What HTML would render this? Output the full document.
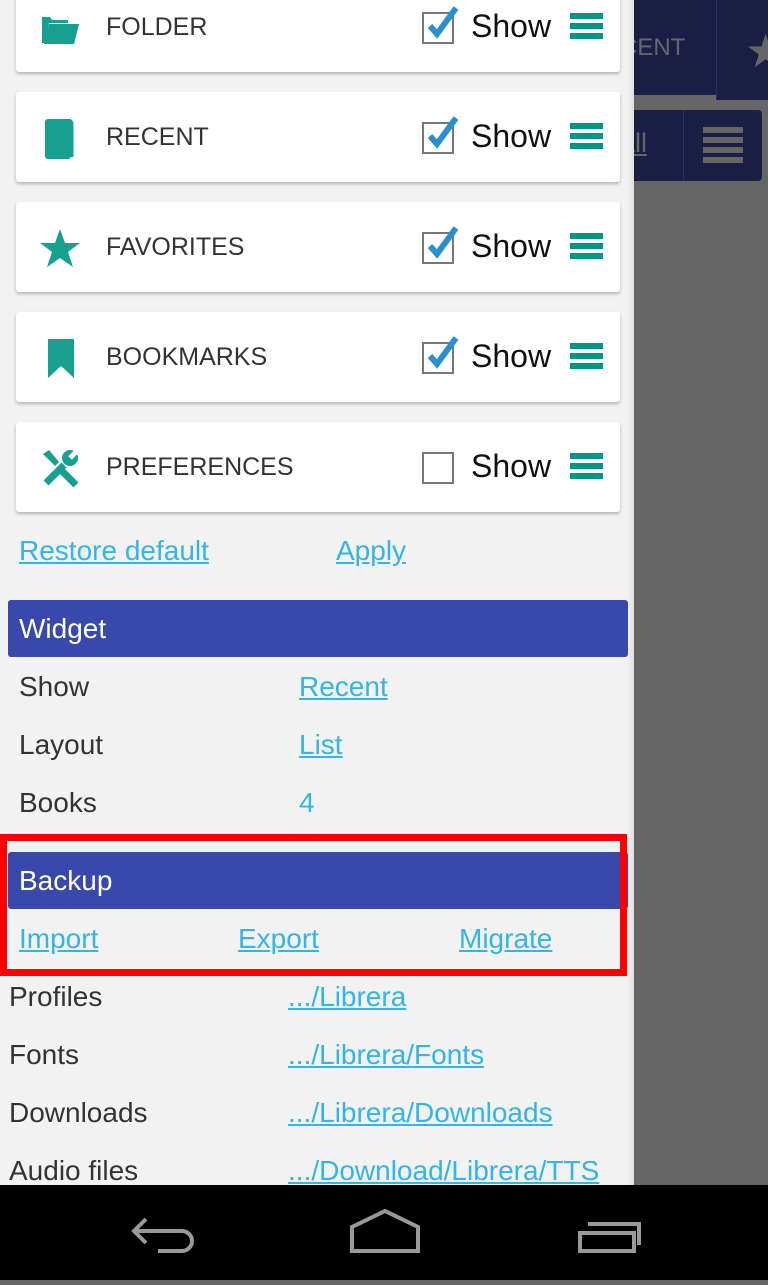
<!DOCTYPE html>
<html><head><meta charset="utf-8"><style>
*{margin:0;padding:0;box-sizing:border-box}
body{width:768px;height:1280px;overflow:hidden;background:#666;font-family:"Liberation Sans",sans-serif;position:relative}
.panel{position:absolute;left:0;top:0;width:634px;height:1185px;background:#f2f2f2;overflow:hidden}
.card{position:absolute;left:16px;width:604px;height:90px;background:#fff;border-radius:3px;box-shadow:0 2px 3px rgba(0,0,0,.25)}
.card .ic{position:absolute;left:24px;top:27px;width:40px;height:40px}
.card .lb{position:absolute;left:90px;top:31px;font-size:25px;color:#333}
.card .cb{position:absolute;left:406px;top:30px;width:32px;height:32px;border:2px solid #777;background:#fff}
.card .cb svg{position:absolute;left:2px;top:-12px}
.card .sh{position:absolute;left:455px;top:26px;font-size:32px;color:#111}
.card .hb{position:absolute;left:554px;top:31px;width:33px}
.card .hb i{display:block;height:6px;background:#009688;margin-bottom:4px}
a{color:#33b5e5;text-decoration:underline}
.t{position:absolute;font-size:28px}
.bar{position:absolute;left:8px;width:620px;height:57px;background:#3949ab;border-radius:3px;color:#fff;font-size:28px;padding:13px 11px}
.g{color:#333}
</style></head><body>
<div style="position:absolute;left:634px;top:0;width:134px;height:100px;background:#1a1e45"></div>
<div style="position:absolute;left:716px;top:0;width:1px;height:100px;background:#2c3060"></div>
<div style="position:absolute;left:634px;top:95px;width:82px;height:5px;background:#666"></div>
<div style="position:absolute;left:620px;top:34px;font-size:24px;color:#666">CENT</div>
<div style="position:absolute;left:745px;top:24px;font-size:46px;color:#666">★</div>
<div style="position:absolute;left:634px;top:110px;width:128px;height:71px;background:#1a1e45;border-radius:0 4px 4px 0"></div>
<div style="position:absolute;left:683px;top:110px;width:1px;height:71px;background:#2c3060"></div>
<div style="position:absolute;left:620px;top:128px;font-size:27px;color:#666;text-decoration:underline">all</div>
<div style="position:absolute;left:703px;top:127px;width:40px"><div style="height:6px;background:#666;margin-bottom:4px"></div><div style="height:6px;background:#666;margin-bottom:4px"></div><div style="height:6px;background:#666;margin-bottom:4px"></div><div style="height:6px;background:#666"></div></div>

<div class="panel">
<div class="card" style="top:-18px">
 <svg class="ic" viewBox="0 0 40 40"><path d="M2 8h8l2 3h16v3H9L5 34H2z" fill="#17a08f"/><path d="M9 15h30l-5 20H4z" fill="#17a08f"/></svg>
 <div class="lb">FOLDER</div><div class="cb"><svg width="36" height="42" viewBox="0 0 36 42"><path d="M4 24l7 8L30 6" stroke="#2a8fcf" stroke-width="6" fill="none"/></svg></div><div class="sh">Show</div><div class="hb"><i></i><i></i><i></i></div></div>
<div class="card" style="top:92px">
 <svg class="ic" viewBox="0 0 40 40"><rect x="5" y="0" width="26" height="40" rx="3" fill="#17a08f"/><path d="M8 1h20a4 4 0 0 1 4 4v33" stroke="#17a08f" stroke-width="3" fill="none"/></svg>
 <div class="lb">RECENT</div><div class="cb"><svg width="36" height="42" viewBox="0 0 36 42"><path d="M4 24l7 8L30 6" stroke="#2a8fcf" stroke-width="6" fill="none"/></svg></div><div class="sh">Show</div><div class="hb"><i></i><i></i><i></i></div></div>
<div class="card" style="top:202px">
 <svg class="ic" viewBox="0 0 40 40"><path d="M20 0l5 14h15l-12 9 5 15-13-9-13 9 5-15L0 14h15z" fill="#17a08f"/></svg>
 <div class="lb">FAVORITES</div><div class="cb"><svg width="36" height="42" viewBox="0 0 36 42"><path d="M4 24l7 8L30 6" stroke="#2a8fcf" stroke-width="6" fill="none"/></svg></div><div class="sh">Show</div><div class="hb"><i></i><i></i><i></i></div></div>
<div class="card" style="top:312px">
 <svg class="ic" viewBox="0 0 40 40"><path d="M8 -1h26v40l-13-12-13 12z" fill="#17a08f"/></svg>
 <div class="lb">BOOKMARKS</div><div class="cb"><svg width="36" height="42" viewBox="0 0 36 42"><path d="M4 24l7 8L30 6" stroke="#2a8fcf" stroke-width="6" fill="none"/></svg></div><div class="sh">Show</div><div class="hb"><i></i><i></i><i></i></div></div>
<div class="card" style="top:422px">
 <svg class="ic" viewBox="0 0 40 40"><path d="M3 5l6-4 10 12-4 4z" fill="#17a08f"/><path d="M6 34l18-18" stroke="#17a08f" stroke-width="7"/><path d="M22 22l14 14" stroke="#17a08f" stroke-width="7"/><circle cx="30" cy="9" r="8" fill="#17a08f"/><path d="M30 9l9-9" stroke="#fff" stroke-width="5"/></svg>
 <div class="lb">PREFERENCES</div><div class="cb"></div><div class="sh">Show</div><div class="hb"><i></i><i></i><i></i></div></div>

<a class="t" style="left:19px;top:535px">Restore default</a>
<a class="t" style="left:336px;top:535px">Apply</a>
<div class="bar" style="top:600px">Widget</div>
<div class="t g" style="left:19px;top:671px">Show</div><a class="t" style="left:299px;top:671px">Recent</a>
<div class="t g" style="left:19px;top:729px">Layout</div><a class="t" style="left:299px;top:729px">List</a>
<div class="t g" style="left:19px;top:787px">Books</div><div class="t" style="left:299px;top:787px;color:#33b5e5">4</div>
<div class="bar" style="top:852px">Backup</div>
<a class="t" style="left:19px;top:923px">Import</a><a class="t" style="left:238px;top:923px">Export</a><a class="t" style="left:459px;top:923px">Migrate</a>
<div style="position:absolute;left:0;top:834px;width:627px;height:142px;border:7px solid #f00"></div>
<div class="t g" style="left:9px;top:981px">Profiles</div><a class="t" style="left:288px;top:981px">.../Librera</a>
<div class="t g" style="left:9px;top:1039px">Fonts</div><a class="t" style="left:288px;top:1039px">.../Librera/Fonts</a>
<div class="t g" style="left:9px;top:1097px">Downloads</div><a class="t" style="left:288px;top:1097px">.../Librera/Downloads</a>
<div class="t g" style="left:9px;top:1155px">Audio files</div><a class="t" style="left:288px;top:1155px">.../Download/Librera/TTS</a>
</div>
<div style="position:absolute;left:627px;top:0;width:7px;height:1185px;background:linear-gradient(90deg,rgba(0,0,0,0),rgba(0,0,0,.08))"></div>
<div style="position:absolute;left:0;top:1185px;width:768px;height:95px;background:#000">
<svg width="768" height="95" viewBox="0 0 768 95" fill="none" stroke="#999" stroke-width="4">
<path d="M146 34l-12 12 12 12M134 46h48a10 10 0 0 1 0 20h-24"/>
<path d="M352 66V42l33-16 33 16v24z"/>
<path d="M580 66V48h54v18zM588 39h51v21"/>
</svg></div>
</body></html>
